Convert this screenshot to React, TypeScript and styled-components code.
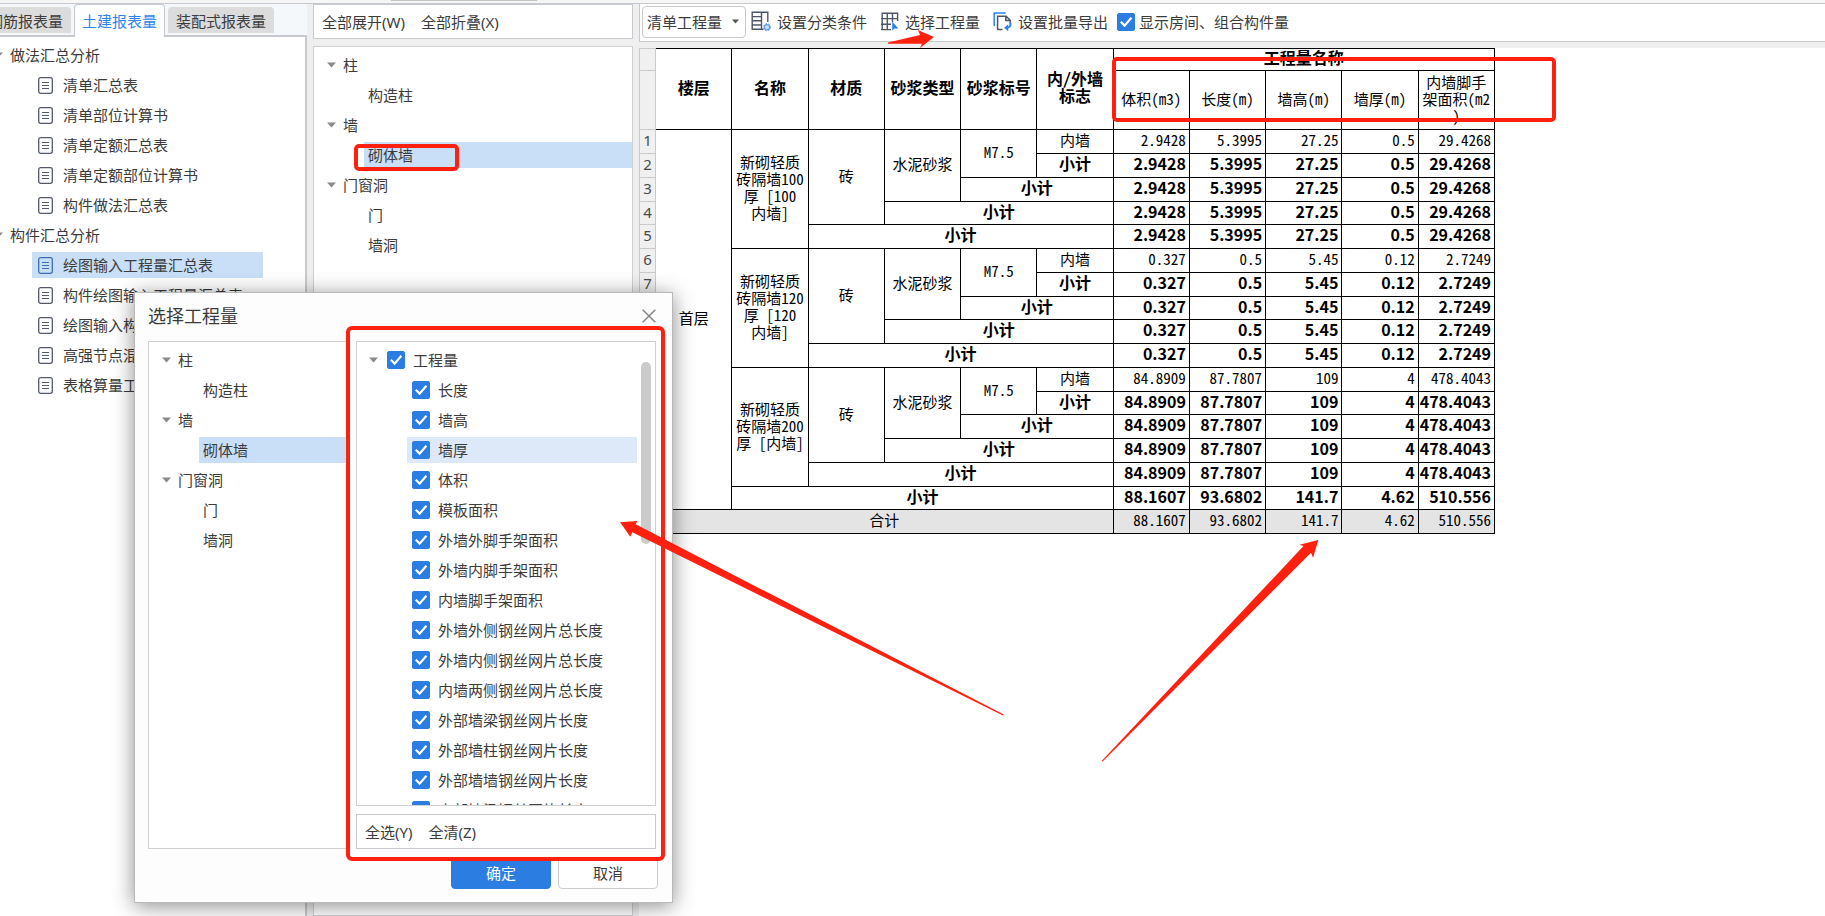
import React from "react";
import styled, { createGlobalStyle, css } from "styled-components";

const UI_FONT = `"Noto Sans", "Noto Sans CJK SC", sans-serif`;
const SHEET_FONT = `"Noto Sans CJK SC", sans-serif`;
const LINE = "#c6cace";
const BLUE = "#2b7de1";
const RED = "#ff2010";

const GlobalStyle = createGlobalStyle`
  *, *::before, *::after { box-sizing: border-box; }
  body { margin: 0; background: #efefef; overflow: hidden; }
  button, select, input { font: inherit; color: inherit; margin: 0; }
`;

const Page = styled.div`
  position: relative;
  display: flex;
  flex-direction: column;
  height: 100vh;
  font: 15px/20px ${UI_FONT};
  color: #3c3c3c;
`;

const TopEdge = styled.div`
  height: 4px;
  flex: none;
  background: #f6f6f6;
  border-bottom: 1px solid ${LINE};
`;

const TopHandle = styled.div`
  width: 146px;
  height: 1px;
  margin-left: 391px;
  background: #c4c4c4;
`;

const Workspace = styled.main`
  display: flex;
  flex: 1;
  min-height: 0;
`;

/* ---------- report list on the left ---------- */

const ReportPane = styled.section`
  width: 307px;
  flex: none;
  display: flex;
  flex-direction: column;
  overflow: hidden;
  margin-right: 6px;
`;

const Tabs = styled.div`
  display: flex;
  align-items: flex-end;
  gap: 3px;
  height: 33px;
  margin-left: -20px;
  padding-bottom: 2px;
  background: #f5f8fb;
  border-bottom: 2px solid ${LINE};
`;

const Tab = styled.button<{ $active?: boolean }>`
  flex: none;
  height: 26px;
  padding: 0 7px;
  border: 1px solid #dcdcdc;
  border-bottom: 0;
  border-radius: 4px 4px 0 0;
  background: #dcdcdc;
  white-space: nowrap;
  ${(p) =>
    p.$active &&
    css`
      height: 33px;
      margin-bottom: -4px;
      background: #fff;
      border-color: ${LINE};
      color: #2f86ea;
    `}
`;

const ReportPanel = styled.div`
  flex: 1;
  padding-top: 3px;
  background: #fff;
  border-right: 2px solid ${LINE};
`;

const PlainList = styled.ul`
  list-style: none;
  margin: 0;
  padding: 0;
`;

const ReportList = styled(PlainList)`
  margin-left: -10px;
`;

const TreeLine = styled.li<{ $indent: number }>`
  display: flex;
  align-items: center;
  gap: 4px;
  height: 30px;
  padding-left: ${(p) => p.$indent}px;
`;

const TreeButton = styled.button<{ $selected?: boolean; $wide?: boolean }>`
  display: flex;
  align-items: center;
  gap: 7px;
  height: 26px;
  padding: 0 4px;
  border: 0;
  text-align: left;
  white-space: nowrap;
  background: ${(p) => (p.$selected ? "#c9dff8" : "transparent")};
  ${(p) => p.$wide && "flex: 1;"}
`;

const ReportButton = styled(TreeButton)`
  width: 231px;
  gap: 10px;
  padding: 0 6px;
`;

const Caret = styled.svg`
  width: 9px;
  height: 6px;
  flex: none;
  fill: #8a8a8a;
`;

/* ---------- component tree in the middle ---------- */

const MiddlePane = styled.section`
  width: 320px;
  flex: none;
  display: flex;
  flex-direction: column;
  gap: 7px;
  margin-right: 6px;
`;

const LinkBar = styled.div`
  display: flex;
  align-items: center;
  gap: 16px;
  height: 35px;
  flex: none;
  padding: 0 8px;
  background: #fff;
  border: 1px solid ${LINE};
`;

const FlatButton = styled.button`
  display: flex;
  align-items: center;
  gap: 6px;
  padding: 0;
  border: 0;
  background: none;
  white-space: nowrap;
`;

const TreePanel = styled.div`
  flex: 1;
  padding-top: 3px;
  background: #fff;
  border: 1px solid #cfd0d2;
  overflow: hidden;
`;

/* ---------- sheet on the right ---------- */

const SheetPane = styled.section`
  flex: 1;
  min-width: 0;
  display: flex;
  flex-direction: column;
  gap: 6px;
`;

const ToolBar = styled.div`
  display: flex;
  align-items: center;
  height: 38px;
  flex: none;
  padding: 0 0 2px 2px;
  background: #fff;
  border: 1px solid ${LINE};
  border-top: 0;
  border-right: 0;
`;

const ToolButtons = styled.div`
  display: flex;
  align-items: center;
  gap: 13px;
  margin: 0 9px 0 5px;
`;

const SelectBox = styled.label`
  display: grid;
  align-items: center;
  width: 104px;
  height: 32px;
  & > * {
    grid-area: 1 / 1;
  }
  & > svg {
    justify-self: end;
    margin-right: 7px;
    pointer-events: none;
  }
`;

const Select = styled.select`
  appearance: none;
  width: 100%;
  height: 32px;
  padding: 0 4px;
  background: #fff;
  border: 1px solid #c9c9c9;
  border-radius: 4px;
`;

const CheckLabel = styled.label`
  display: flex;
  align-items: center;
  gap: 4px;
  white-space: nowrap;
`;

const TickBox = styled.span`
  display: grid;
  width: 18px;
  height: 18px;
  flex: none;
  & > * {
    grid-area: 1 / 1;
  }
  & > svg {
    pointer-events: none;
  }
`;

const TickInput = styled.input`
  appearance: none;
  width: 18px;
  height: 18px;
  border-radius: 2px;
  border: 1px solid ${BLUE};
  &:checked {
    background: ${BLUE};
  }
`;

const SheetArea = styled.div`
  flex: 1;
  background: #fff;
`;

const Sheet = styled.table`
  table-layout: fixed;
  width: 856px;
  border-collapse: separate;
  border-spacing: 0;
  font: 15px/17px ${SHEET_FONT};
  font-feature-settings: "hwid";
  color: #000;
  tbody tr {
    height: 24px;
  }
  tbody tr:nth-child(4n) {
    height: 23px;
  }
`;

const GutterCol = styled.col`
  width: 17px;
`;

const HeadRow = styled.tr<{ $tall?: boolean }>`
  height: ${(p) => (p.$tall ? 59 : 23)}px;
`;

const cell = css`
  padding: 0 0 4px;
  border-right: 1px solid #000;
  border-bottom: 1px solid #000;
  text-align: center;
`;

const ColumnHead = styled.th<{ $light?: boolean }>`
  ${cell}
  font-size: ${(p) => (p.$light ? 15 : 16)}px;
  font-weight: ${(p) => (p.$light ? 400 : 700)};
  white-space: nowrap;
  thead tr:first-child & {
    border-top: 1px solid #000;
  }
`;

const Gutter = styled.th`
  padding: 0 0 2px;
  background: #f0f0f0;
  border: 1px solid #cacaca;
  border-top: 0;
  font: 15px/17px ${UI_FONT};
  color: #4a4a4a;
  thead tr:first-child & {
    border-top: 1px solid #cacaca;
  }
`;

const Cell = styled.td<{ $total?: boolean; $bold?: boolean }>`
  ${cell}
  white-space: nowrap;
  font-size: ${(p) => (p.$bold ? 16 : 15)}px;
  font-weight: ${(p) => (p.$bold ? 700 : 400)};
  background: ${(p) => (p.$total ? "#e4e4e4" : "#fff")};
`;

const NumberCell = styled(Cell)`
  padding-right: 3px;
  text-align: right;
  ${(p) => p.$bold && "font-feature-settings: normal;"}
`;

/* ---------- dialog ---------- */

const Dialog = styled.div`
  position: absolute;
  left: 134px;
  top: 292px;
  width: 539px;
  padding: 0 14px 13px 13px;
  background: #fdfdfd;
  border: 1px solid #b9b9b9;
  box-shadow: 0 3px 20px rgba(0, 0, 0, 0.45);
`;

const DialogHead = styled.header`
  display: flex;
  align-items: center;
  justify-content: space-between;
  height: 48px;
  padding: 0 2px 2px 0;
`;

const DialogTitle = styled.h2`
  margin: 0;
  font-size: 18px;
  font-weight: 400;
`;

const DialogBody = styled.div`
  display: grid;
  grid-template-columns: 202px 300px;
  gap: 6px;
`;

const QuantityColumn = styled.div`
  display: flex;
  flex-direction: column;
  gap: 8px;
`;

const QuantityList = styled.div`
  display: flex;
  justify-content: space-between;
  height: 465px;
  padding: 3px 4px 0 0;
  background: #fff;
  border: 1px solid #cfd0d2;
  overflow: hidden;
`;

const QuantityItems = styled(PlainList)`
  width: 280px;
`;

const QuantityLabel = styled.label<{ $hover?: boolean }>`
  display: flex;
  align-items: center;
  gap: 8px;
  height: 26px;
  flex: 1;
  padding-left: 5px;
  white-space: nowrap;
  background: ${(p) => (p.$hover ? "#dde9f9" : "transparent")};
`;

const ScrollThumb = styled.div`
  width: 10px;
  height: 182px;
  margin-top: 17px;
  border-radius: 5px;
  background: #cbcbcb;
`;

const DialogFoot = styled.footer`
  display: flex;
  justify-content: flex-end;
  gap: 7px;
  margin-top: 8px;
`;

const DialogButton = styled.button<{ $primary?: boolean }>`
  width: 100px;
  height: 32px;
  border-radius: 4px;
  border: 1px solid ${(p) => (p.$primary ? BLUE : "#cccccc")};
  background: ${(p) => (p.$primary ? BLUE : "#fff")};
  color: ${(p) => (p.$primary ? "#fff" : "#3c3c3c")};
`;

const Markup = styled.svg`
  position: absolute;
  left: 0;
  top: 0;
  pointer-events: none;
`;

/* ---------- icons ---------- */

const CaretIcon = () => (
  <Caret viewBox="0 0 9 6" aria-hidden="true">
    <path d="M0 0.5h9L4.5 5.5z" />
  </Caret>
);

const ReportIcon = ({ active }: { active?: boolean }) => (
  <svg width="15" height="17" viewBox="0 0 15 17" fill="none" stroke={active ? "#3f6fb0" : "#535a6b"} aria-hidden="true">
    <rect x="0.7" y="0.7" width="13.6" height="15.6" rx="2" strokeWidth="1.3" />
    <path d="M4 5.5h7M4 8.5h7M4 11.5h7" strokeWidth="1.2" />
  </svg>
);

const ClassifyIcon = () => (
  <svg width="20" height="21" viewBox="0 0 20 21" fill="none" stroke="#4d5566" strokeWidth="1.4" aria-hidden="true">
    <path d="M10.5 18.3H1.2V1.2h15.6V11M10.5 1.2v17.1h2M1.2 5.6h9.3M1.2 9.8h9.3M1.2 14h9.3" />
    <g stroke="#5b9df0">
      <circle cx="16" cy="16.2" r="2.6" fill="#cfe3fb" strokeWidth="1.2" />
      <circle cx="16" cy="16.2" r="3.6" strokeWidth="1" strokeDasharray="1.5 1.5" />
    </g>
  </svg>
);

const PickIcon = () => (
  <svg width="19" height="20" viewBox="0 0 19 20" fill="none" stroke="#4d5566" strokeWidth="1.4" aria-hidden="true">
    <path d="M11 17.6H1M17.6 9V1.2H2.2v16.4M1 6.6h16.6M1 12.2h10M7.3 1.2v16.4M12.5 1.2v9" />
    <path d="M12.3 9.8v9l2-2.2h4z" fill="#1f7bf0" stroke="none" />
  </svg>
);

const ExportIcon = () => (
  <svg width="19" height="20" viewBox="0 0 19 20" fill="none" strokeWidth="1.5" aria-hidden="true">
    <path d="M1.2 14V1h11.5" stroke="#2b83f2" />
    <path d="M9.5 17.6H4.6V4.2h8.6l4 4v3.4M12.8 4.4v4h4.2" stroke="#4d5566" />
    <path d="M17.4 10.8c.6 2.8-.6 4.7-3.2 4.9" stroke="#2b83f2" strokeWidth="2" />
    <path d="M15.2 12.2v7l-4-3.4z" fill="#2b83f2" />
  </svg>
);

const CloseIcon = () => (
  <svg width="14" height="14" viewBox="0 0 14 14" stroke="#868686" strokeWidth="1.5" aria-hidden="true">
    <path d="M0.7 0.7l12.6 12.6M13.3 0.7L0.7 13.3" />
  </svg>
);

const Tick = () => (
  <TickBox>
    <TickInput type="checkbox" defaultChecked />
    <svg width="18" height="18" viewBox="0 0 18 18" fill="none" stroke="#fff" strokeWidth="2.2" aria-hidden="true">
      <path d="M3.8 8.8l3.8 3.8 6.8-7.8" />
    </svg>
  </TickBox>
);

/* ---------- data ---------- */

const REPORTS = [
  { title: "做法汇总分析", items: ["清单汇总表", "清单部位计算书", "清单定额汇总表", "清单定额部位计算书", "构件做法汇总表"] },
  {
    title: "构件汇总分析",
    items: ["绘图输入工程量汇总表", "构件绘图输入工程量汇总表", "绘图输入构件工程量计算书", "高强节点混凝土工程量", "表格算量工程量汇总表"],
  },
];
const CURRENT_REPORT = "绘图输入工程量汇总表";

const COMPONENTS = [
  { title: "柱", items: ["构造柱"] },
  { title: "墙", items: ["砌体墙"] },
  { title: "门窗洞", items: ["门", "墙洞"] },
];

const QUANTITIES = [
  "长度", "墙高", "墙厚", "体积", "模板面积",
  "外墙外脚手架面积", "外墙内脚手架面积", "内墙脚手架面积",
  "外墙外侧钢丝网片总长度", "外墙内侧钢丝网片总长度", "内墙两侧钢丝网片总长度",
  "外部墙梁钢丝网片长度", "外部墙柱钢丝网片长度", "外部墙墙钢丝网片长度", "内部墙梁钢丝网片长度",
];

const WALLS = [
  { name: ["新砌轻质", "砖隔墙100", "厚 [100", "内墙]"], values: ["2.9428", "5.3995", "27.25", "0.5", "29.4268"] },
  { name: ["新砌轻质", "砖隔墙120", "厚 [120", "内墙]"], values: ["0.327", "0.5", "5.45", "0.12", "2.7249"] },
  { name: ["新砌轻质", "砖隔墙200", "厚 [内墙]"], values: ["84.8909", "87.7807", "109", "4", "478.4043"] },
];
const TOTALS = ["88.1607", "93.6802", "141.7", "4.62", "510.556"];

/* ---------- parts ---------- */

const Lines = ({ text }: { text: string[] }) => (
  <>
    {text.map((t, i) => (
      <React.Fragment key={t}>
        {i > 0 && <br />}
        {t}
      </React.Fragment>
    ))}
  </>
);

const ComponentTree = () => (
  <PlainList>
    {COMPONENTS.map((group) => (
      <React.Fragment key={group.title}>
        <TreeLine $indent={9}>
          <TreeButton>
            <CaretIcon />
            {group.title}
          </TreeButton>
        </TreeLine>
        {group.items.map((item) => (
          <TreeLine key={item} $indent={50}>
            <TreeButton $wide $selected={item === "砌体墙"}>
              {item}
            </TreeButton>
          </TreeLine>
        ))}
      </React.Fragment>
    ))}
  </PlainList>
);

const Numbers = ({ values, bold, total }: { values: string[]; bold?: boolean; total?: boolean }) => (
  <>
    {values.map((v, i) => (
      <NumberCell key={i} $bold={bold} $total={total}>
        {v}
      </NumberCell>
    ))}
  </>
);

const WallRows = ({ index }: { index: number }) => {
  const { name, values } = WALLS[index];
  const first = index * 5 + 1;
  return (
    <>
      <tr>
        <Gutter scope="row">{first}</Gutter>
        {index === 0 && <Cell rowSpan={16}>首层</Cell>}
        <Cell rowSpan={5}>
          <Lines text={name} />
        </Cell>
        <Cell rowSpan={4}>砖</Cell>
        <Cell rowSpan={3}>水泥砂浆</Cell>
        <Cell rowSpan={2}>M7.5</Cell>
        <Cell>内墙</Cell>
        <Numbers values={values} />
      </tr>
      {[1, 2, 3, 4].map((span) => (
        <tr key={span}>
          <Gutter scope="row">{first + span}</Gutter>
          <Cell $bold colSpan={span}>
            小计
          </Cell>
          <Numbers values={values} bold />
        </tr>
      ))}
    </>
  );
};

const QuantitySheet = () => (
  <Sheet>
    <colgroup>
      <GutterCol />
      {Array.from({ length: 11 }, (_, i) => (
        <col key={i} />
      ))}
    </colgroup>
    <thead>
      <HeadRow>
        <Gutter />
        {["楼层", "名称", "材质", "砂浆类型", "砂浆标号"].map((h) => (
          <ColumnHead key={h} rowSpan={2}>
            {h}
          </ColumnHead>
        ))}
        <ColumnHead rowSpan={2}>
          <Lines text={["内/外墙", "标志"]} />
        </ColumnHead>
        <ColumnHead colSpan={5}>工程量名称</ColumnHead>
      </HeadRow>
      <HeadRow $tall>
        <Gutter />
        {["体积(m3)", "长度(m)", "墙高(m)", "墙厚(m)"].map((h) => (
          <ColumnHead key={h} $light>
            {h}
          </ColumnHead>
        ))}
        <ColumnHead $light>
          <Lines text={["内墙脚手", "架面积(m2", ")"]} />
        </ColumnHead>
      </HeadRow>
    </thead>
    <tbody>
      <WallRows index={0} />
      <WallRows index={1} />
      <WallRows index={2} />
      <tr>
        <Gutter scope="row">16</Gutter>
        <Cell $bold colSpan={5}>
          小计
        </Cell>
        <Numbers values={TOTALS} bold />
      </tr>
      <tr>
        <Gutter scope="row">17</Gutter>
        <Cell $total colSpan={6}>
          合计
        </Cell>
        <Numbers values={TOTALS} total />
      </tr>
    </tbody>
  </Sheet>
);

const QuantityDialog = () => (
  <Dialog role="dialog" aria-labelledby="dialog-title">
    <DialogHead>
      <DialogTitle id="dialog-title">选择工程量</DialogTitle>
      <FlatButton aria-label="关闭">
        <CloseIcon />
      </FlatButton>
    </DialogHead>
    <DialogBody>
      <TreePanel>
        <ComponentTree />
      </TreePanel>
      <QuantityColumn>
        <QuantityList>
          <QuantityItems>
            <TreeLine $indent={12}>
              <CaretIcon />
              <QuantityLabel>
                <Tick />
                工程量
              </QuantityLabel>
            </TreeLine>
            {QUANTITIES.map((q) => (
              <TreeLine key={q} $indent={50}>
                <QuantityLabel $hover={q === "墙厚"}>
                  <Tick />
                  {q}
                </QuantityLabel>
              </TreeLine>
            ))}
          </QuantityItems>
          <ScrollThumb />
        </QuantityList>
        <LinkBar>
          <FlatButton>全选(Y)</FlatButton>
          <FlatButton>全清(Z)</FlatButton>
        </LinkBar>
      </QuantityColumn>
    </DialogBody>
    <DialogFoot>
      <DialogButton $primary>确定</DialogButton>
      <DialogButton>取消</DialogButton>
    </DialogFoot>
  </Dialog>
);

export default function App() {
  return (
    <Page>
      <GlobalStyle />
      <TopEdge>
        <TopHandle />
      </TopEdge>
      <Workspace>
        <ReportPane>
          <Tabs>
            <Tab>钢筋报表量</Tab>
            <Tab $active>土建报表量</Tab>
            <Tab>装配式报表量</Tab>
          </Tabs>
          <ReportPanel>
            <ReportList>
              {REPORTS.map((group) => (
                <React.Fragment key={group.title}>
                  <TreeLine $indent={0}>
                    <TreeButton>
                      <CaretIcon />
                      {group.title}
                    </TreeButton>
                  </TreeLine>
                  {group.items.map((item) => (
                    <TreeLine key={item} $indent={42}>
                      <ReportButton $selected={item === CURRENT_REPORT}>
                        <ReportIcon active={item === CURRENT_REPORT} />
                        {item}
                      </ReportButton>
                    </TreeLine>
                  ))}
                </React.Fragment>
              ))}
            </ReportList>
          </ReportPanel>
        </ReportPane>

        <MiddlePane>
          <LinkBar>
            <FlatButton>全部展开(W)</FlatButton>
            <FlatButton>全部折叠(X)</FlatButton>
          </LinkBar>
          <TreePanel>
            <ComponentTree />
          </TreePanel>
        </MiddlePane>

        <SheetPane>
          <ToolBar>
            <SelectBox>
              <Select aria-label="工程量类型" defaultValue="清单工程量">
                <option>清单工程量</option>
              </Select>
              <svg width="7" height="5" viewBox="0 0 7 5" fill="#555" aria-hidden="true">
                <path d="M0 0.5h7L3.5 4.5z" />
              </svg>
            </SelectBox>
            <ToolButtons>
              <FlatButton>
                <ClassifyIcon />
                设置分类条件
              </FlatButton>
              <FlatButton>
                <PickIcon />
                选择工程量
              </FlatButton>
              <FlatButton>
                <ExportIcon />
                设置批量导出
              </FlatButton>
            </ToolButtons>
            <CheckLabel>
              <Tick />
              显示房间、组合构件量
            </CheckLabel>
          </ToolBar>
          <SheetArea>
            <QuantitySheet />
          </SheetArea>
        </SheetPane>
      </Workspace>

      <QuantityDialog />

      <Markup width="1825" height="916" viewBox="0 0 1825 916" aria-hidden="true">
        <g fill="none" stroke={RED} strokeWidth="4">
          <rect x="356" y="146" width="101" height="23" rx="3" />
          <rect x="1114" y="59" width="440" height="61" rx="3" />
          <rect x="348" y="328" width="315" height="531" rx="4" />
        </g>
        <g fill={RED}>
          <path d="M934 37L918 30L920 35L888 42.6V43.8L922 43.8L920 48z" />
          <path d="M620 522.3L637.3 521L635.7 524.3L1003.8 714.6L1003 715.6L632.3 532.3L630.3 536.7z" />
          <path d="M1318.3 540L1299.5 544.7L1303.5 546L1101.6 761L1102.6 761.6L1311 552.7L1313 557.7z" />
        </g>
      </Markup>
    </Page>
  );
}
